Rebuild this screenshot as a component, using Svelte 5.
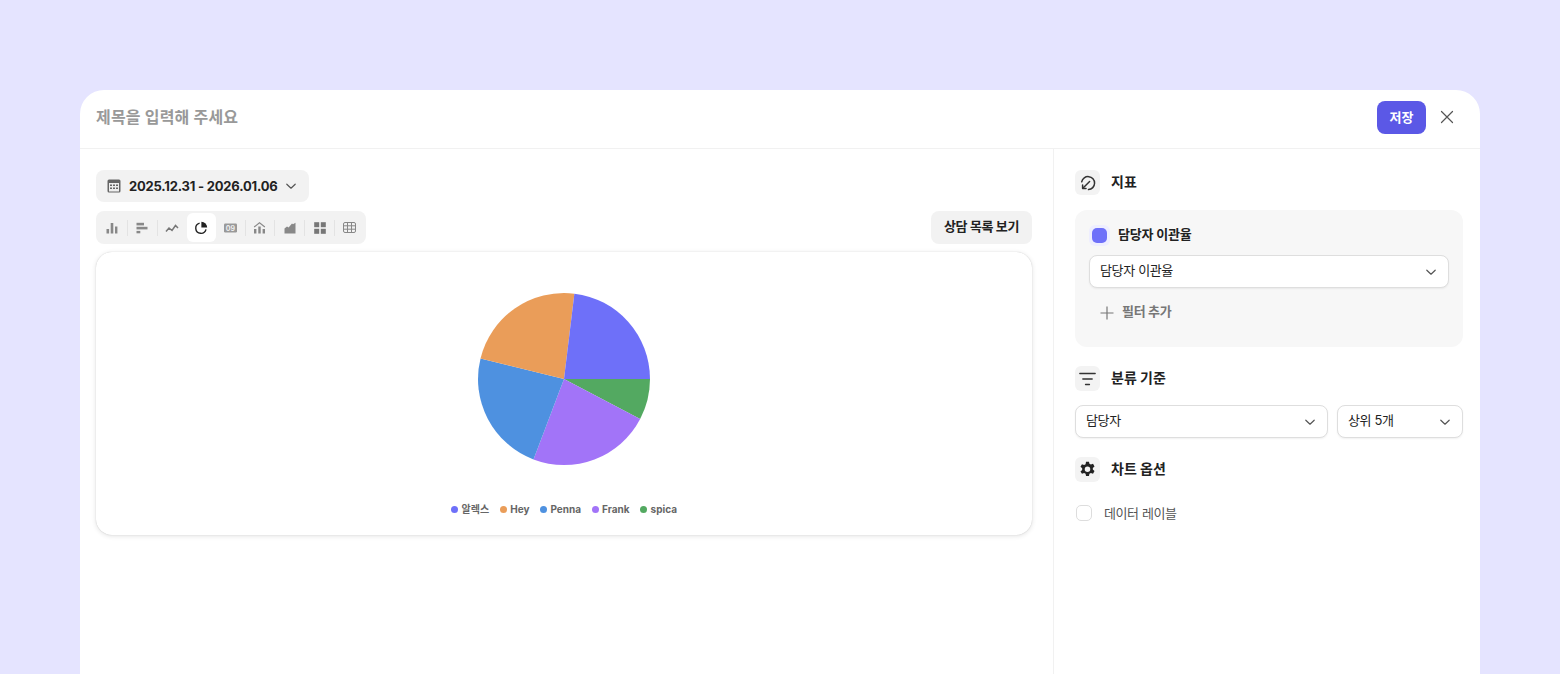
<script>
  const slices = [
    { name: '알렉스', color: '#6e70f9', value: 3 },
    { name: 'Hey', color: '#ea9d59', value: 3 },
    { name: 'Penna', color: '#4e91e0', value: 3 },
    { name: 'Frank', color: '#a274f8', value: 3 },
    { name: 'spica', color: '#53a961', value: 1 }
  ];
  const drawOrder = [slices[4], slices[3], slices[2], slices[1], slices[0]];
  const total = 13;
  const R = 86;

  function point(deg) {
    const rad = (deg * Math.PI) / 180;
    return `${(R * Math.cos(rad)).toFixed(2)} ${(R * Math.sin(rad)).toFixed(2)}`;
  }

  let angle = 0;
  const arcs = drawOrder.map((s) => {
    const start = angle;
    angle += (s.value / total) * 360;
    return { color: s.color, d: `M0 0L${point(start)}A${R} ${R} 0 0 1 ${point(angle)}Z` };
  });
</script>

{#snippet chevron()}
  <svg class="chev" width="12" height="12" viewBox="0 0 12 12" fill="none"><path d="M1.8 4.2L6 8.2l4.2-4" stroke="#555" stroke-width="1.2" stroke-linecap="round" stroke-linejoin="round"/></svg>
{/snippet}

<div class="page">
  <div class="modal">
    <header class="head">
      <span class="title">제목을 입력해 주세요</span>
      <button class="save"><span>저장</span></button>
      <svg class="close" width="14" height="14" viewBox="0 0 14 14" fill="none"><path d="M1.5 1.5l11 11M12.5 1.5l-11 11" stroke="#555" stroke-width="1.2" stroke-linecap="round"/></svg>
    </header>
    <div class="body">
      <main class="left">
        <button class="date">
          <svg class="cal" width="14" height="14" viewBox="0 0 14 14"><rect x="0.5" y="0.5" width="13" height="13" rx="1.5" fill="#666"/><rect x="2" y="4" width="10" height="8.5" fill="#eee"/><g fill="#666"><rect x="3" y="5.5" width="2" height="1.5"/><rect x="6" y="5.5" width="2" height="1.5"/><rect x="9" y="5.5" width="2" height="1.5"/><rect x="3" y="8.5" width="2" height="1.5"/><rect x="6" y="8.5" width="2" height="1.5"/><rect x="9" y="8.5" width="2" height="1.5"/></g></svg>
          <span class="range">2025.12.31 - 2026.01.06</span>
          {@render chevron()}
        </button>
        <div class="tools">
          <div class="types">
            <span class="type"><svg width="12" height="12" viewBox="0 0 12 12" fill="#888"><rect x="0.5" y="7" width="2.6" height="4.5"/><rect x="4.7" y="1" width="2.6" height="10.5"/><rect x="9" y="4.5" width="2.4" height="7"/></svg></span>
            <i></i>
            <span class="type"><svg width="12" height="12" viewBox="0 0 12 12" fill="#888"><rect x="0.5" y="0.8" width="7.5" height="2.6"/><rect x="0.5" y="4.8" width="11" height="2.6"/><rect x="0.5" y="8.9" width="3.8" height="2.4"/></svg></span>
            <i></i>
            <span class="type"><svg width="14" height="12" viewBox="0 0 14 12" fill="none" stroke="#777" stroke-width="1.5"><path d="M1 9.5l3-3.5 3 2.5 3.5-5L13 6"/></svg></span>
            <span class="type on"><svg width="14" height="14" viewBox="0 0 14 14" fill="none"><path d="M5.6 2.1A5.2 5.2 0 1 0 12 8.4" stroke="#222" stroke-width="1.4"/><path d="M7.4.8a5.8 5.8 0 0 1 5.8 5.8H7.4z" fill="#222"/></svg></span>
            <span class="type"><svg width="13" height="10" viewBox="0 0 13 10"><rect x="0" y="0.5" width="13" height="9" rx="1.2" fill="#999"/><text x="6.5" y="7.6" text-anchor="middle" class="num">09</text></svg></span>
            <i></i>
            <span class="type"><svg width="13" height="13" viewBox="0 0 13 13" fill="#888"><path d="M0.8 5.6L6.5 1l5.7 4.6-.7.9-5-4-5 4z"/><rect x="1" y="8" width="2.4" height="4.5"/><rect x="5.3" y="5.5" width="2.4" height="7"/><rect x="9.6" y="8" width="2.4" height="4.5"/></svg></span>
            <i></i>
            <span class="type"><svg width="12" height="12" viewBox="0 0 12 12" fill="#888"><path d="M.5 11.5V6.5L3 4.6l1.6 1L8 1.4l1 .9 2.5-1.6v10.8z"/></svg></span>
            <i></i>
            <span class="type"><svg width="12" height="12" viewBox="0 0 12 12" fill="#777"><rect x="0.2" y="0.2" width="5" height="5"/><rect x="6.8" y="0.2" width="5" height="5"/><rect x="0.2" y="6.8" width="5" height="5"/><rect x="6.8" y="6.8" width="5" height="5"/></svg></span>
            <i></i>
            <span class="type"><svg width="13" height="11" viewBox="0 0 13 11" fill="none" stroke="#888" stroke-width="1"><rect x="0.5" y="0.5" width="12" height="10" rx="1.5"/><path d="M0.5 3.8h12M0.5 7.2h12M4.5 .5v10M8.5 .5v10"/></svg></span>
          </div>
          <button class="list"><span>상담 목록 보기</span></button>
        </div>
        <section class="card">
          <svg class="pie" width="174" height="174" viewBox="-87 -87 174 174">
            {#each arcs as a}
              <path d={a.d} fill={a.color} />
            {/each}
          </svg>
          <div class="legend">
            {#each slices as s}
              <span class="item"><b style="background:{s.color}"></b>{s.name}</span>
            {/each}
          </div>
        </section>
      </main>
      <aside class="right">
        <div class="sec">
          <span class="ico"><svg width="16" height="16" viewBox="0 0 16 16" fill="none" stroke="#333" stroke-width="1.5" stroke-linecap="round" stroke-linejoin="round"><path d="M1.7 6.8A6.5 6.5 0 1 1 8.5 14.6"/><path d="M9.6 6.5L2.8 13.2"/><path d="M2.6 10v3.5h3.4"/></svg></span>
          <h3>지표</h3>
        </div>
        <div class="metric">
          <div class="m-name"><span class="swatch"><b></b></span><span class="lift">담당자 이관율</span></div>
          <div class="select full"><span>담당자 이관율</span>{@render chevron()}</div>
          <div class="add">
            <svg width="14" height="14" viewBox="0 0 14 14" fill="none"><path d="M7 .5v13M.5 7h13" stroke="#777" stroke-width="1.2"/></svg>
            <span class="lift">필터 추가</span>
          </div>
        </div>
        <div class="sec s2">
          <span class="ico"><svg width="17" height="14" viewBox="0 0 17 14" fill="none" stroke="#333" stroke-width="1.3" stroke-linecap="round"><path d="M.8 1.5h15.4M3.8 7h9.4M6.5 12.5h4"/></svg></span>
          <h3>분류 기준</h3>
        </div>
        <div class="row">
          <div class="select grow"><span>담당자</span>{@render chevron()}</div>
          <div class="select small"><span>상위 5개</span>{@render chevron()}</div>
        </div>
        <div class="sec s3">
          <span class="ico"><svg width="17" height="17" viewBox="0 0 16 16"><path fill="#222" fill-rule="evenodd" d="M6.6.6h2.8l.4 2 1.4.8 2-.7 1.4 2.4-1.6 1.4v1.6l1.6 1.4-1.4 2.4-2-.7-1.4.8-.4 2H6.6l-.4-2-1.4-.8-2 .7L1.4 9.9 3 8.5V6.9L1.4 5.5l1.4-2.4 2 .7 1.4-.8zM8 5.1a2.6 2.6 0 1 0 0 5.2 2.6 2.6 0 0 0 0-5.2z"/></svg></span>
          <h3>차트 옵션</h3>
        </div>
        <div class="check"><span class="box"></span><span>데이터 레이블</span></div>
      </aside>
    </div>
  </div>
</div>

<style>
  :global(body) {
    margin: 0;
    background: #e5e4ff;
    font-family: Inter, "Noto Sans CJK KR", sans-serif;
    color: #222;
  }
  .page {
    height: 674px;
    padding: 90px 80px 0;
    box-sizing: border-box;
    overflow: hidden;
  }
  .modal {
    height: 640px;
    background: #fff;
    border-radius: 24px 24px 0 0;
  }
  .head {
    height: 59px;
    box-sizing: border-box;
    display: flex;
    align-items: center;
    padding: 0 26px 3px 16px;
    border-bottom: 1px solid #f1f1f1;
  }
  .title {
    flex: 1;
    font-size: 16px;
    font-weight: 700;
    color: #999;
    letter-spacing: 0.2px;
    line-height: 20px;
    padding-bottom: 1px;
  }
  .save {
    width: 49px;
    height: 33px;
    border: 0;
    border-radius: 8px;
    background: #5b58e6;
    color: #fff;
    font: 700 13px/16px Inter, "Noto Sans CJK KR", sans-serif;
    margin-right: 14px;
    padding: 0 0 2px;
  }
  .close { margin-top: -1px; }
  .body {
    display: flex;
    height: 100%;
  }
  .left {
    width: 974px;
    box-sizing: border-box;
    padding: 21px 21px 0 16px;
    border-right: 1px solid #f1f1f1;
  }
  .date {
    display: flex;
    align-items: center;
    height: 32px;
    width: 213px;
    padding: 0 12px 0 11px;
    box-sizing: border-box;
    gap: 8px;
    border: 0;
    border-radius: 8px;
    background: #f2f2f2;
    font: 700 13px Inter, "Noto Sans CJK KR", sans-serif;
    letter-spacing: -0.2px;
    color: #222;
  }
  .date .chev { margin-left: -1px; }
  .range { white-space: nowrap; }
  .chev, .cal { flex: none; }
  .tools {
    display: flex;
    justify-content: space-between;
    align-items: center;
    margin-top: 9px;
  }
  .types {
    display: flex;
    align-items: center;
    height: 33px;
    width: 270px;
    padding: 0 2px;
    box-sizing: border-box;
    background: #f2f2f2;
    border-radius: 8px;
  }
  .type {
    flex: 1;
    height: 29px;
    display: flex;
    align-items: center;
    justify-content: center;
    border-radius: 6px;
  }
  .type.on { background: #fff; flex: none; width: 29px; }
  .types i {
    width: 1px;
    height: 16px;
    background: #e3e3e3;
    flex: none;
  }
  .num {
    font: 700 7px Inter, sans-serif;
    fill: #eee;
  }
  .list {
    height: 33px;
    width: 101px;
    padding: 0 0 3px;
    border: 0;
    border-radius: 8px;
    background: #f2f2f2;
    font: 700 13px/16px Inter, "Noto Sans CJK KR", sans-serif;
    letter-spacing: -0.35px;
    color: #222;
  }
  .card {
    margin-top: 8px;
    height: 283px;
    box-sizing: border-box;
    border-radius: 16px;
    background: #fff;
    box-shadow: 0 0 1px rgba(0,0,0,.22), 0 1px 5px rgba(0,0,0,.12);
    display: flex;
    flex-direction: column;
    align-items: center;
    padding-top: 40px;
  }
  .pie { display: block; }
  .legend {
    display: flex;
    gap: 10.5px;
    margin-top: 37px;
    font-size: 10px;
    font-weight: 700;
    color: #666;
    line-height: 12px;
  }
  .item {
    display: flex;
    align-items: center;
    gap: 3.5px;
  }
  .item b {
    width: 7px;
    height: 7px;
    border-radius: 50%;
  }
  .right {
    flex: 1;
    padding: 21px 17px 0 21px;
  }
  .sec {
    display: flex;
    align-items: center;
    gap: 11px;
    height: 25px;
  }
  .s2 { margin-top: 19px; }
  .s3 { margin-top: 19px; }
  .ico {
    width: 25px;
    height: 25px;
    border-radius: 6px;
    background: #f3f3f3;
    display: flex;
    align-items: center;
    justify-content: center;
  }
  h3 {
    margin: 0 0 1px;
    font-size: 14px;
    line-height: 18px;
    font-weight: 700;
    color: #222;
  }
  .lift { line-height: 16px; padding-bottom: 3px; }
  .metric {
    margin-top: 15px;
    height: 137px;
    box-sizing: border-box;
    background: #f7f7f7;
    border-radius: 12px;
    padding: 14px 14px 0;
  }
  .m-name {
    display: flex;
    align-items: center;
    gap: 8px;
    font-size: 13px;
    font-weight: 700;
    letter-spacing: -0.2px;
    height: 22px;
  }
  .swatch {
    width: 21px;
    height: 21px;
    border-radius: 6px;
    background: #eeeeff;
    display: flex;
    align-items: center;
    justify-content: center;
  }
  .swatch b {
    width: 15px;
    height: 15px;
    border-radius: 5px;
    background: #6e70f9;
  }
  .select {
    display: flex;
    align-items: center;
    justify-content: space-between;
    height: 33px;
    box-sizing: border-box;
    padding: 0 11px 0 10px;
    background: #fff;
    border: 1px solid #dedede;
    border-radius: 8px;
    box-shadow: 0 1px 2px rgba(0,0,0,.06);
    font-size: 13px;
    letter-spacing: -0.35px;
    color: #222;
  }
  .select span { line-height: 16px; padding-bottom: 3px; }
  .full { margin-top: 9px; }
  .add {
    display: flex;
    align-items: center;
    gap: 8px;
    margin: 15px 0 0 11px;
    font-size: 13px;
    font-weight: 700;
    letter-spacing: -0.3px;
    color: #777;
  }
  .row {
    display: flex;
    gap: 9px;
    margin-top: 14px;
  }
  .grow { flex: 1; }
  .small { width: 126px; }
  .check {
    display: flex;
    align-items: center;
    gap: 12px;
    margin: 23px 0 0 1px;
    font-size: 13px;
    line-height: 16px;
    letter-spacing: -0.4px;
    color: #555;
  }
  .box {
    width: 14px;
    height: 14px;
    border: 1.5px solid #ddd;
    border-radius: 5px;
  }
</style>
